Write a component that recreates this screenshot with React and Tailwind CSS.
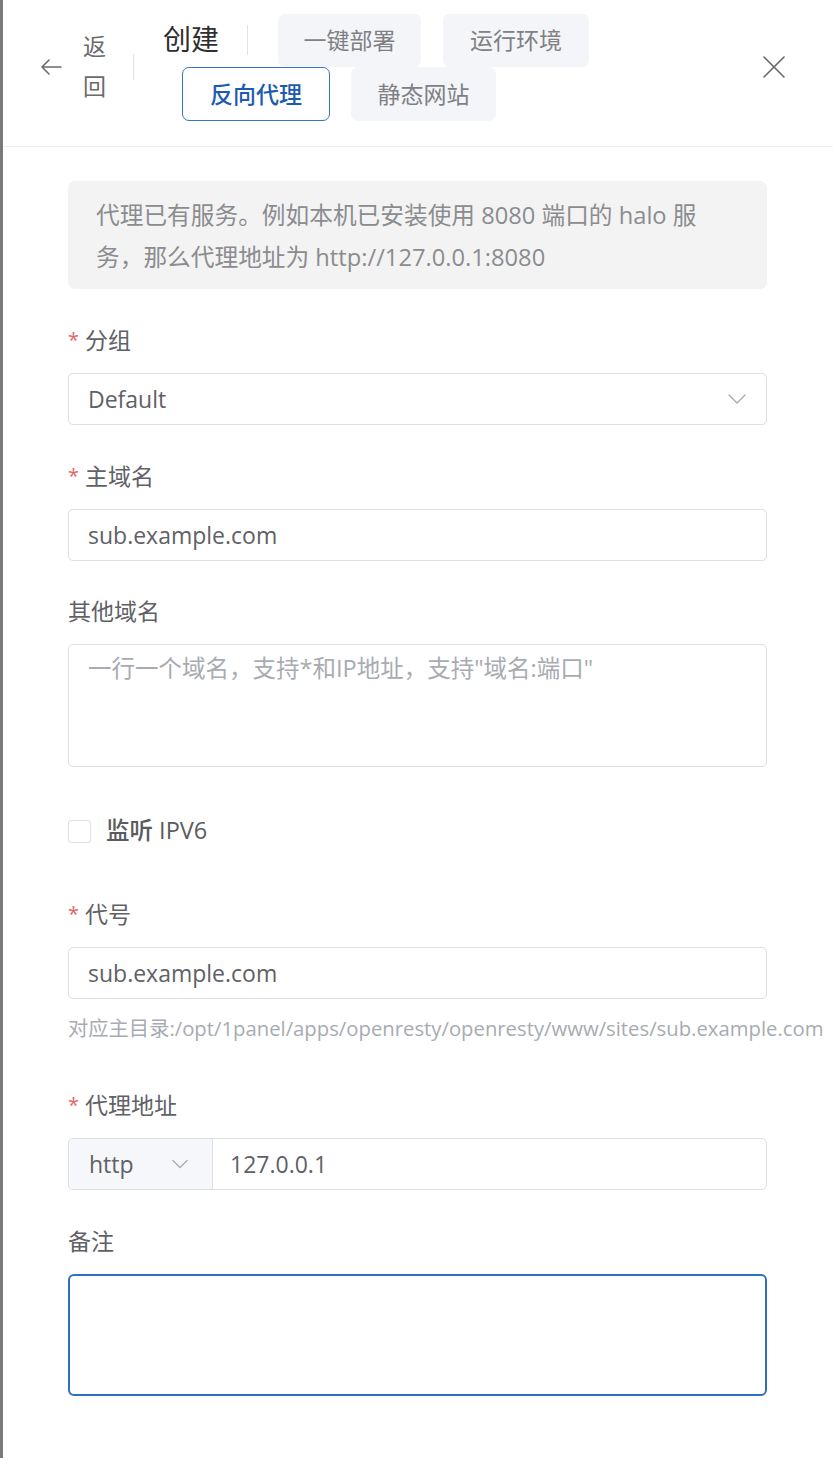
import React from "react";

const FONT = { fontFamily: '"Open Sans", "Noto Sans CJK SC", sans-serif' };

function Chevron({ className }) {
  return (
    <svg className={className} width="18" height="10" viewBox="0 0 18 10" fill="none">
      <path d="M1 1 L9 9 L17 1" stroke="currentColor" strokeWidth="1.4" strokeLinecap="round" strokeLinejoin="round" />
    </svg>
  );
}

function Label({ required, children }) {
  return (
    <div className="h-[32px] flex items-center text-[23px] text-[#5f6166] mb-[17px]">
      {required && <span className="text-[#e06666] mr-[6px] text-[20px]">*</span>}
      <span>{children}</span>
    </div>
  );
}

function Field({ children, className = "" }) {
  return (
    <div className={"h-[52px] border border-[#dcdfe6] rounded-[5px] flex items-center px-[19px] text-[23px] text-[#5f6166] bg-white " + className}>
      {children}
    </div>
  );
}

export default function App() {
  return (
    <div className="flex min-h-[1458px] bg-white overflow-hidden" style={FONT}>
      <div className="w-[3px] bg-[#7a7a7a] shrink-0" />
      <div className="flex-1 min-w-0 flex flex-col">
        {/* Header */}
        <div className="h-[147px] border-b border-[#ececec] flex items-start pt-[13px] pl-[37px] pr-[48px]">
          <div className="flex items-center h-[108px]">
            <svg width="22" height="18" viewBox="0 0 22 18" fill="none" className="text-[#6b6b6b]">
              <path d="M21 9 H2 M9 2 L2 9 L9 16" stroke="currentColor" strokeWidth="1.6" strokeLinecap="round" strokeLinejoin="round" />
            </svg>
            <div className="ml-[21px] flex flex-col text-[23px] leading-[40px] text-[#6b6b6b] -mt-[2px]">
              <span>返</span>
              <span>回</span>
            </div>
            <div className="ml-[27px] w-px h-[26px] bg-[#e2e2e2]" />
          </div>
          <div className="ml-[29px] flex flex-col">
            <div className="flex items-center h-[54px]">
              <span className="text-[28px] text-[#2f2f2f] -mt-[2px]">创建</span>
              <div className="ml-[28px] w-px h-[30px] bg-[#e2e2e2]" />
              <div className="ml-[30px] h-[53px] w-[143px] rounded-[7px] bg-[#f4f5f8] flex items-center justify-center text-[23px] text-[#7f8083]">一键部署</div>
              <div className="ml-[22px] h-[53px] w-[146px] rounded-[7px] bg-[#f4f5f8] flex items-center justify-center text-[23px] text-[#7f8083]">运行环境</div>
            </div>
            <div className="flex items-center h-[54px] pl-[19px]">
              <div className="h-[54px] w-[148px] rounded-[7px] border-[1.5px] border-[#3574c0] bg-white flex items-center justify-center text-[23px] text-[#1d5bb0] font-medium">反向代理</div>
              <div className="ml-[21px] h-[54px] w-[145px] rounded-[7px] bg-[#f4f5f8] flex items-center justify-center text-[23px] text-[#7f8083]">静态网站</div>
            </div>
          </div>
          <div className="flex-1" />
          <div className="h-[108px] flex items-center">
            <svg width="22" height="22" viewBox="0 0 22 22" fill="none" className="text-[#666]">
              <path d="M1 1 L21 21 M21 1 L1 21" stroke="currentColor" strokeWidth="1.6" strokeLinecap="round" />
            </svg>
          </div>
        </div>

        {/* Form */}
        <div className="pl-[65px] pr-[66px] pt-[34px] flex flex-col">
          <div className="rounded-[7px] bg-[#f3f3f4] px-[28px] pt-[13px] pb-[11px] text-[23.7px] leading-[42px] text-[#8b8c8f] whitespace-nowrap">
            代理已有服务。例如本机已安装使用 8080 端口的 halo 服<br />务，那么代理地址为 http://127.0.0.1:8080
          </div>

          <div className="mt-[35px]">
            <Label required>分组</Label>
            <Field className="justify-between">
              <span>Default</span>
              <Chevron className="text-[#a8abb2] mr-[1px]" />
            </Field>
          </div>

          <div className="mt-[35px]">
            <Label required>主域名</Label>
            <Field>
              <span>sub.example.com</span>
            </Field>
          </div>

          <div className="mt-[34px]">
            <Label>其他域名</Label>
            <div className="h-[123px] border border-[#dcdfe6] rounded-[5px] px-[19px] pt-[7px] text-[23.5px] leading-[32px] text-[#a8abb2]">
              一行一个域名，支持*和IP地址，支持"域名:端口"
            </div>
          </div>

          <div className="mt-[35px] h-[58px] flex items-center">
            <div className="w-[23px] h-[23px] border border-[#dcdfe6] rounded-[3px] bg-white" />
            <span className="ml-[15px] text-[23.5px] text-[#5a5c60] font-medium">监听 IPV6</span>
          </div>

          <div className="mt-[38px]">
            <Label required>代号</Label>
            <Field>
              <span>sub.example.com</span>
            </Field>
            <div className="mt-[13px] h-[32px] flex items-center text-[20.3px] text-[#a8abb2] whitespace-nowrap">
              对应主目录:/opt/1panel/apps/openresty/openresty/www/sites/sub.example.com
            </div>
          </div>

          <div className="mt-[45px]">
            <Label required>代理地址</Label>
            <div className="h-[52px] border border-[#dcdfe6] rounded-[5px] flex text-[23px] text-[#5f6166] overflow-hidden">
              <div className="w-[144px] bg-[#f5f7fa] border-r border-[#dcdfe6] flex items-center justify-between pl-[20px] pr-[24px]">
                <span>http</span>
                <Chevron className="text-[#a8abb2] w-[16px]" />
              </div>
              <div className="flex-1 flex items-center pl-[17px]">127.0.0.1</div>
            </div>
          </div>

          <div className="mt-[35px]">
            <Label>备注</Label>
            <div className="h-[122px] border-2 border-[#2f6fbf] rounded-[6px] bg-white" />
          </div>
        </div>
      </div>
    </div>
  );
}
